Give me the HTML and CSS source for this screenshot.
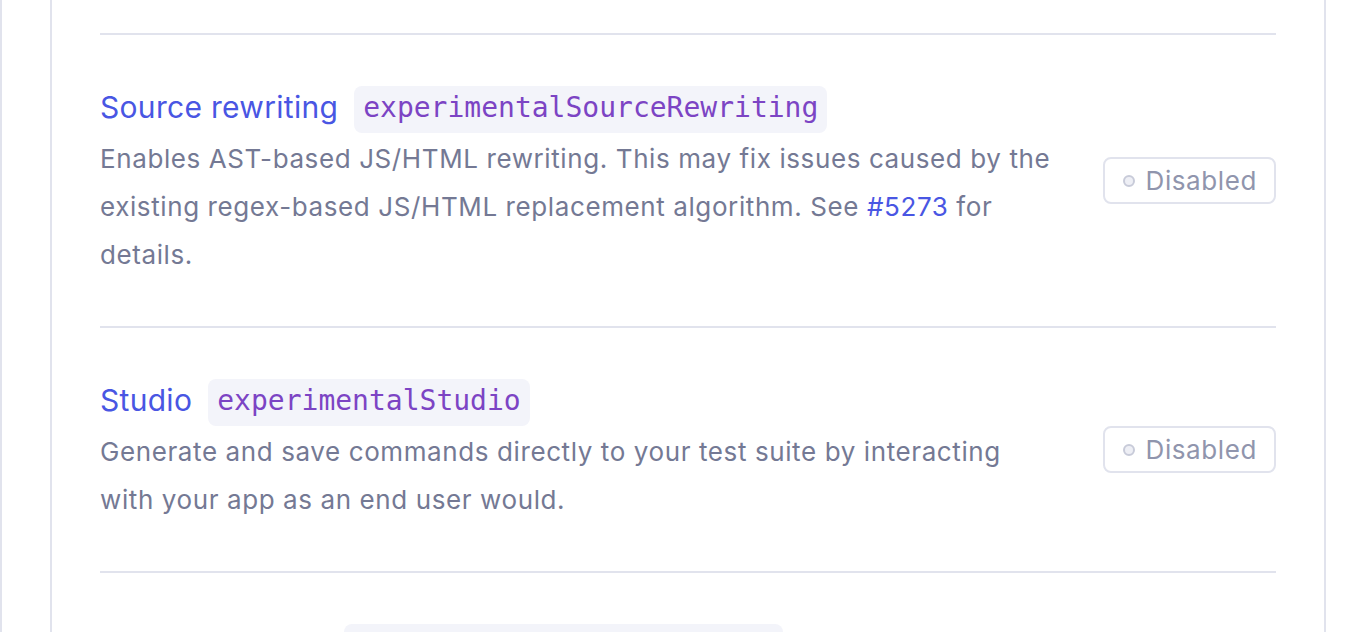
FILE: index.html
```html
<!DOCTYPE html>
<html lang="en">
<head>
<meta charset="utf-8">
<link rel="stylesheet" href="styles.css">
</head>
<body>
<div class="outer">
  <div class="card">
    <div class="row">
      <div class="info">
        <div class="head">
          <span class="title">Source rewriting</span>
          <code class="key">experimentalSourceRewriting</code>
        </div>
        <p class="desc">Enables AST-based JS/HTML rewriting. This may fix issues caused by the existing regex-based JS/HTML replacement algorithm. See <a class="link" href="#">#5273</a> for details.</p>
      </div>
      <div class="status"><span class="dot"></span>Disabled</div>
    </div>
    <div class="row">
      <div class="info">
        <div class="head">
          <span class="title">Studio</span>
          <code class="key">experimentalStudio</code>
        </div>
        <p class="desc">Generate and save commands directly to your test suite by interacting with your app as an end user would.</p>
      </div>
      <div class="status"><span class="dot"></span>Disabled</div>
    </div>
    <div class="row">
      <div class="info">
        <div class="head">
          <span class="title">WebKit Support</span>
          <code class="key">experimentalWebKitSupport</code>
        </div>
        <p class="desc">Adds support for testing in the WebKit browser engine used by Safari.</p>
      </div>
      <div class="status"><span class="dot"></span>Disabled</div>
    </div>
  </div>
</div>
</body>
</html>
```

FILE: styles.css
```css
html, body {
  margin: 0;
  padding: 0;
  background: #ffffff;
}
body {
  font-family: Inter, "Noto Sans", sans-serif;
  height: 632px;
  overflow: hidden;
}
.outer {
  border-left: 2px solid #e1e3ed;
  padding-left: 48px;
  padding-right: 34px;
  margin-top: -20px;
}
.card {
  border-left: 2px solid #e1e3ed;
  border-right: 2px solid #e1e3ed;
  padding: 53px 48px 0;
}
.row {
  display: flex;
  align-items: center;
  justify-content: space-between;
  border-top: 2px solid #e1e3ed;
  padding: 51px 0 47px;
}
.info {
  flex: 0 0 956px;
}
.head {
  display: flex;
  align-items: center;
  gap: 16px;
  height: 47px;
  margin-bottom: 2px;
}
.title {
  font-size: 30px;
  letter-spacing: 0.3px;
  color: #4956e3;
  padding-bottom: 5px;
}
.key {
  font-family: "DejaVu Sans Mono", monospace;
  font-size: 28px;
  color: #7c44c4;
  background: #f3f4fa;
  border-radius: 8px;
  padding: 0 9px 4px;
  line-height: 43px;
}
.desc {
  margin: 0;
  font-size: 26px;
  letter-spacing: 0.6px;
  line-height: 48px;
  color: #747994;
}
.link {
  color: #4956e3;
  text-decoration: none;
}
.status {
  display: flex;
  align-items: center;
  gap: 11px;
  border: 2px solid #e1e3ed;
  border-radius: 8px;
  height: 43px;
  padding: 0 17px 0 18px;
  margin-bottom: 4px;
  font-size: 26px;
  letter-spacing: 0.6px;
  color: #9095ad;
}
.dot {
  width: 8px;
  height: 8px;
  border: 2px solid #c8cbd9;
  background: #eeeff5;
  border-radius: 50%;
}
```
